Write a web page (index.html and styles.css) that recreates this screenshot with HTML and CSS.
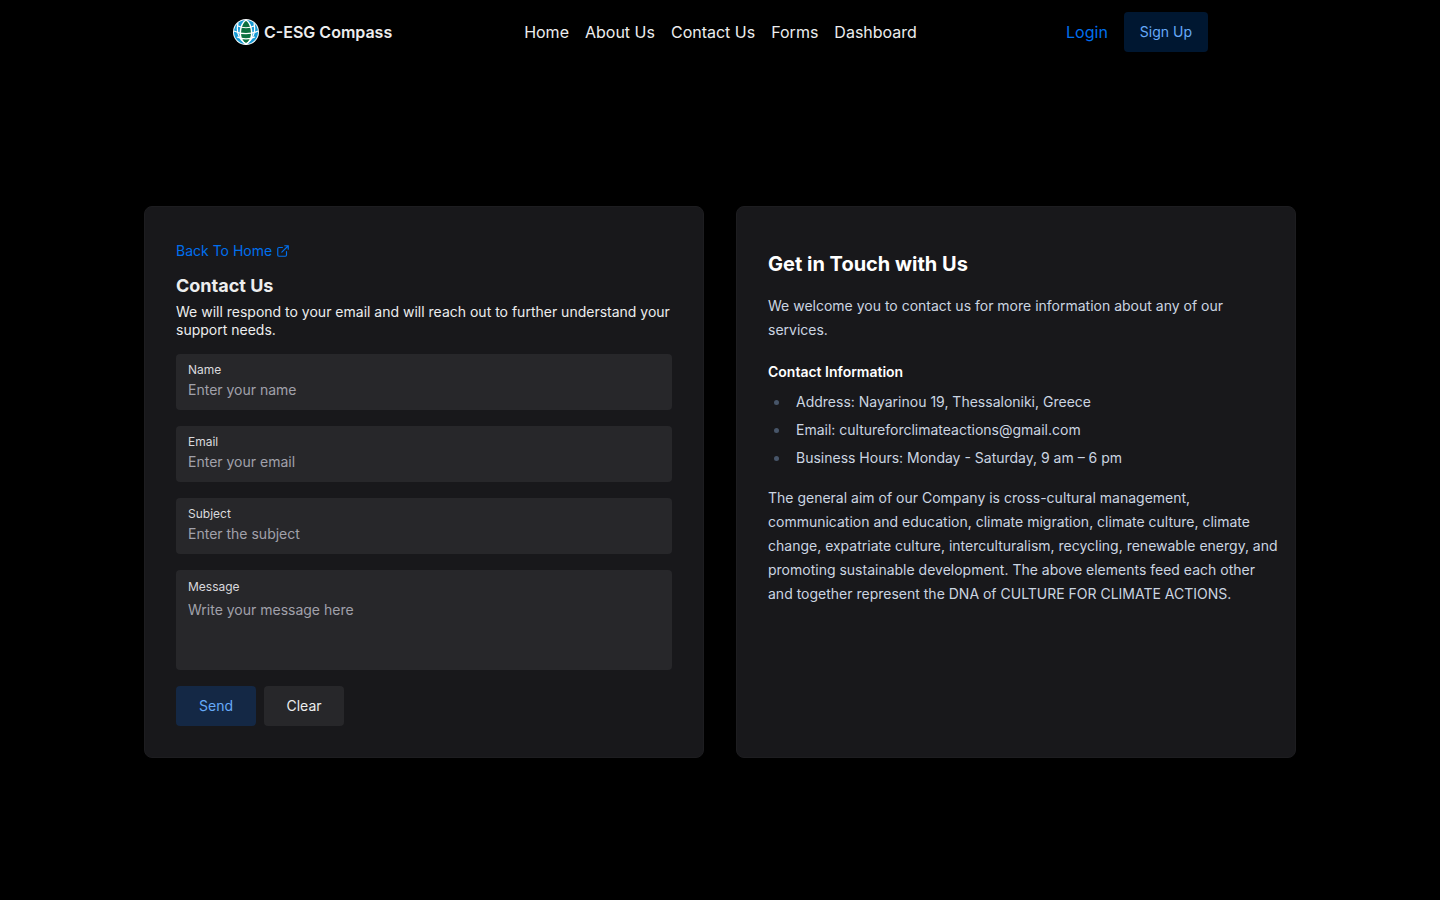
FILE: index.html
```html
<!DOCTYPE html>
<html lang="en">
<head>
<meta charset="utf-8">
<meta name="viewport" content="width=device-width, initial-scale=1">
<title>C-ESG Compass - Contact Us</title>
<link rel="stylesheet" href="styles.css">
</head>
<body>
<nav class="navbar">
  <div class="navbar-inner">
    <a class="brand" href="#">
      <svg class="brand-logo" viewBox="0 0 26 26" aria-hidden="true">
        <circle cx="13" cy="13" r="13" fill="#f4fafb"/>
        <circle cx="13" cy="13" r="12" fill="#169bd5"/>
        <path d="M13 1C7 5 6 16 9 21C10 23 12 24.500 13 25C14 24.500 16 23 17 21C20 16 19 5 13 1Z" fill="#0c7040" stroke="#fff" stroke-width="1.500"/>
        <path d="M5 4C3 13 5 20 13 25M21 4C23 13 21 20 13 25M4 6.500C10 9.500 16 9.500 22 6.500M1 12C8 15.500 18 15.500 25 12M4 18C9 20.500 17 20.500 22 18" fill="none" stroke="#fff" stroke-width="1.200"/>
      </svg>
      <span>C-ESG Compass</span>
    </a>
    <ul class="nav-links">
      <li><a href="#">Home</a></li>
      <li><a href="#">About Us</a></li>
      <li><a href="#">Contact Us</a></li>
      <li><a href="#">Forms</a></li>
      <li><a href="#">Dashboard</a></li>
    </ul>
    <div class="nav-actions">
      <a class="login" href="#">Login</a>
      <a class="button button-signup" href="#">Sign Up</a>
    </div>
  </div>
</nav>
<main class="page">
  <div class="cards">
    <section class="card">
      <a class="back" href="#">Back To Home
        <svg class="back-icon" viewBox="0 0 24 24" fill="none" stroke="currentColor" stroke-width="2" stroke-linecap="round" stroke-linejoin="round" aria-hidden="true"><path d="M18 13v6a2 2 0 0 1-2 2H5a2 2 0 0 1-2-2V8a2 2 0 0 1 2-2h6M15 3h6v6M10 14L21 3"/></svg>
      </a>
      <h1 class="form-title">Contact Us</h1>
      <p class="form-intro">We will respond to your email and will reach out to further understand your support needs.</p>
      <form class="form">
        <div class="field">
          <label for="name">Name</label>
          <input id="name" type="text" placeholder="Enter your name">
        </div>
        <div class="field">
          <label for="email">Email</label>
          <input id="email" type="email" placeholder="Enter your email">
        </div>
        <div class="field">
          <label for="subject">Subject</label>
          <input id="subject" type="text" placeholder="Enter the subject">
        </div>
        <div class="field field-message">
          <label for="message">Message</label>
          <textarea id="message" rows="3" placeholder="Write your message here"></textarea>
        </div>
        <div class="form-actions">
          <button class="button button-send" type="submit">Send</button>
          <button class="button button-clear" type="reset">Clear</button>
        </div>
      </form>
    </section>
    <section class="card prose">
      <h2>Get in Touch with Us</h2>
      <p>We welcome you to contact us for more information about any of our services.</p>
      <h3>Contact Information</h3>
      <ul>
        <li>Address: Nayarinou 19, Thessaloniki, Greece</li>
        <li>Email: cultureforclimateactions@gmail.com</li>
        <li>Business Hours: Monday - Saturday, 9 am – 6 pm</li>
      </ul>
      <p>The general aim of our Company is cross-cultural management, communication and education, climate migration, climate culture, climate change, expatriate culture, interculturalism, recycling, renewable energy, and promoting sustainable development. The above elements feed each other and together represent the DNA of CULTURE FOR CLIMATE ACTIONS.</p>
    </section>
  </div>
</main>
</body>
</html>
```
FILE: styles.css
```css
*, *::before, *::after { box-sizing: border-box; }

body {
  margin: 0;
  min-height: 100vh;
  display: flex;
  flex-direction: column;
  background: #000;
  color: #ecedee;
  font-family: Inter, "Liberation Sans", sans-serif;
  font-size: 14px;
  line-height: 20px;
}

h1, h2, h3, p, ul { margin: 0; padding: 0; }
a { color: inherit; text-decoration: none; }

.navbar-inner {
  display: flex;
  align-items: center;
  max-width: 1024px;
  height: 64px;
  margin: 0 auto;
  padding: 0 24px;
  font-size: 16px;
  line-height: 24px;
}
.brand, .nav-actions { flex: 1; display: flex; align-items: center; }
.brand { gap: 5px; padding-left: 1px; font-weight: 600; }
.brand-logo { width: 26px; height: 26px; }
.nav-links { display: flex; gap: 16px; list-style: none; }
.nav-actions { justify-content: flex-end; gap: 16px; }
.login { color: #006fee; }

.button {
  display: inline-flex;
  align-items: center;
  justify-content: center;
  min-width: 80px;
  height: 40px;
  padding: 0 16px;
  border: 0;
  border-radius: 4px;
  font: inherit;
  font-size: 14px;
  line-height: 20px;
  cursor: pointer;
}
.button-signup { background: #001731; color: #66aaf9; }
.button-send { background: #142845; color: #66aaf9; }
.button-clear { background: #27272a; color: #ecedee; }

.page {
  flex: 1;
  display: flex;
  align-items: center;
  justify-content: center;
  padding: 24px;
}
.cards {
  display: grid;
  grid-template-columns: 1fr 1fr;
  gap: 32px;
  width: 100%;
  max-width: 1152px;
}
.card {
  padding: 31px;
  border: 1px solid #1d1d20;
  border-radius: 8px;
  background: #18181b;
}

.back {
  display: flex;
  align-items: center;
  gap: 4px;
  margin-top: 3px;
  color: #006fee;
}
.back-icon { width: 14px; height: 14px; }
.form-title { margin-top: 11px; font-size: 18px; line-height: 28px; font-weight: 700; }
.form-intro { margin-top: 3px; line-height: 18px; }
.form { display: flex; flex-direction: column; gap: 16px; margin-top: 15px; }

.field {
  display: flex;
  flex-direction: column;
  padding: 8px 12px 10px;
  border-radius: 4px;
  background: #27272a;
}
.field label { font-size: 12px; line-height: 16px; color: #d9d9dd; }
.field input, .field textarea {
  width: 100%;
  padding: 0;
  border: 0;
  outline: 0;
  resize: none;
  background: transparent;
  color: #ecedee;
  font: inherit;
}
.field input { height: 22px; }
.field textarea { height: 60px; margin-top: 5px; }
.field ::placeholder { color: #a1a1aa; opacity: 1; }
.field-message { padding-top: 9px; }
.form-actions { display: flex; gap: 8px; }

.prose { padding-top: 43px; padding-right: 14px; color: #cbd5e1; line-height: 24px; }
.prose h2 { color: #fff; font-size: 20px; line-height: 28px; font-weight: 700; }
.prose h3 { margin-top: 20px; color: #fff; font-size: 14px; line-height: 20px; font-weight: 600; }
.prose p { margin-top: 16px; }
.prose ul { list-style: none; margin-top: 8px; display: grid; gap: 4px; }
.prose li { display: flex; align-items: center; gap: 17px; padding-left: 6px; }
.prose li::before { content: ""; width: 5px; height: 5px; border-radius: 50%; background: #475569; }
```
